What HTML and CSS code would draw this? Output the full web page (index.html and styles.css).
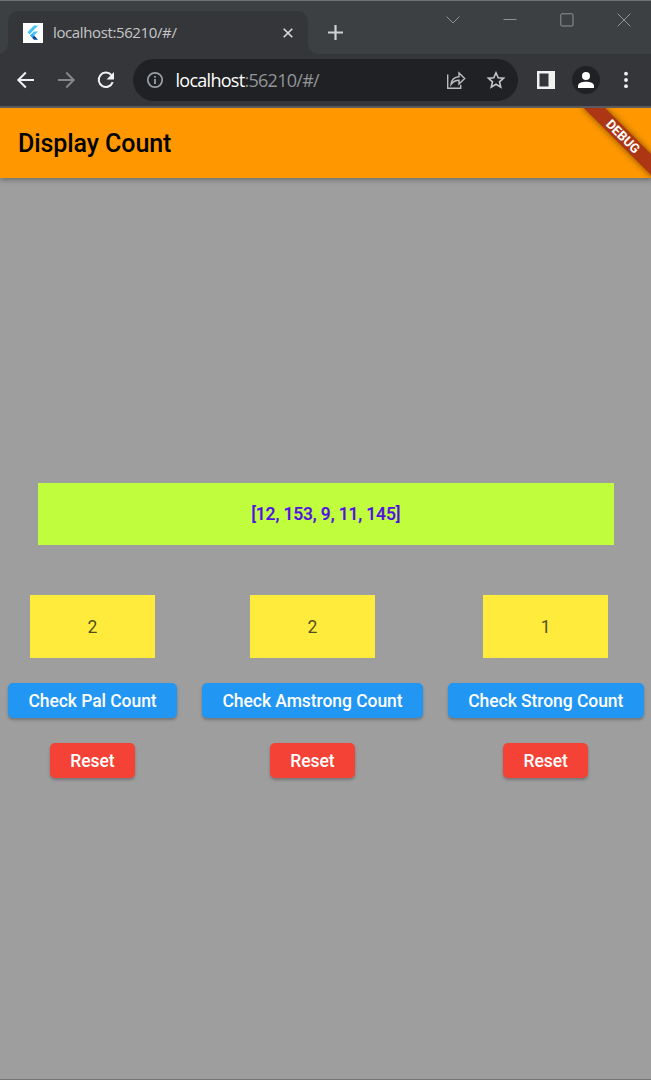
FILE: index.html
```html
<!DOCTYPE html>
<html lang="en">
<head>
<meta charset="utf-8">
<title>Display Count</title>
<link rel="stylesheet" href="styles.css">
</head>
<body>
<div class="window">
  <header class="tabstrip">
    <div class="tab">
      <svg class="favicon" width="20" height="20" viewBox="0 0 20 20"><path fill="#fff" d="M0 0h20v20H0z"/><path fill="#45c3f8" d="M11 2.5h4L6.5 11.5 4.4 9.3zM11 8.5h4L11 12.6 9 10.6z"/><path fill="#29a8ec" d="M7 12.6l2.1-2.1 2.1 2.1-2.1 2.1z"/><path fill="#07479b" d="M9.1 14.7l2.1-2.1 3.8 4.2h-4z"/></svg>
      <span class="tab-title">localhost:56210/#/</span>
      <svg class="tab-close" width="12" height="12" viewBox="0 0 12 12"><path d="M1.7 1.7l8.6 8.6M10.3 1.7l-8.6 8.6" stroke="#dadce0" stroke-width="1.6"/></svg>
    </div>
    <svg class="new-tab" width="16" height="16" viewBox="0 0 16 16"><path d="M7.500 0v15M0 7.500h15" stroke="#cfd1d3" stroke-width="2.200"/></svg>
    <div class="controls">
      <svg width="14" height="14" viewBox="0 0 14 14"><path d="M.5 3.5L7 10l6.500-6.500"/></svg>
      <svg width="14" height="14" viewBox="0 0 14 14"><path d="M.5 6.500h13"/></svg>
      <svg width="14" height="14" viewBox="0 0 14 14"><rect x=".8" y=".8" width="12.200" height="12.200" rx="1"/></svg>
      <svg width="14" height="14" viewBox="0 0 14 14"><path d="M.7.7l12.600 12.600M13.300.7L.7 13.300"/></svg>
    </div>
  </header>
  <div class="toolbar">
    <svg class="nav" width="20" height="20" viewBox="0 0 20 20"><path d="M18 10H2.700M9.800 2.500L2.300 10l7.500 7.500" fill="none" stroke="#f1f1f2" stroke-width="2"/></svg>
    <svg class="nav" width="20" height="20" viewBox="0 0 20 20"><path d="M2 10h15.300M10.200 2.500l7.500 7.500-7.500 7.500" fill="none" stroke="#86878a" stroke-width="2"/></svg>
    <svg class="nav" width="20" height="20" viewBox="0 0 20 20"><path d="M16.700 12.200A7.200 7.200 0 1 1 15.300 5" fill="none" stroke="#f1f1f2" stroke-width="2"/><path d="M18 2v7.500h-7.500z" fill="#f1f1f2"/></svg>
    <div class="omnibox">
      <svg width="18" height="18" viewBox="0 0 18 18"><circle cx="9" cy="9" r="7.200" fill="none" stroke="#9aa0a6" stroke-width="1.700"/><path d="M9 8v5M9 5v1.800" stroke="#9aa0a6" stroke-width="1.800"/></svg>
      <span class="url"><span class="host">localhost</span>:56210/#/</span>
      <svg class="share" width="20" height="20" viewBox="0 0 20 20" fill="none" stroke="#b9bbbd" stroke-width="1.400"><path d="M1.700 4.500v13.800h13v-3.500"/><path d="M5 14.500c.5-4.700 3-7.500 8-7.800V3l5.700 5.500L13 14v-3.700c-3.500 0-6 1.500-8 4.200z"/></svg>
      <svg width="20" height="20" viewBox="0 0 20 20"><path d="M10 2.700l2.200 5 5.400.5-4.100 3.600 1.200 5.300L10 14.300l-4.700 2.800 1.200-5.300-4.100-3.600 5.400-.5z" fill="none" stroke="#c4c6c8" stroke-width="1.600"/></svg>
    </div>
    <svg class="panel" width="18" height="18" viewBox="0 0 18 18"><path fill="#f1f1f2" fill-rule="evenodd" d="M0 0h18v18H0zM2.500 2.500v13h9v-13z"/></svg>
    <svg class="avatar" width="28" height="28" viewBox="0 0 28 28"><circle cx="14" cy="14" r="14" fill="#202124"/><circle cx="14" cy="10" r="4" fill="#fff"/><path d="M6 22v-2c0-3 4-4.300 8-4.300s8 1.300 8 4.300v2z" fill="#fff"/></svg>
    <svg class="more" width="6" height="18" viewBox="0 0 6 18" fill="#f1f1f2"><circle cx="3" cy="2.700" r="1.900"/><circle cx="3" cy="9" r="1.900"/><circle cx="3" cy="15.200" r="1.900"/></svg>
  </div>
  <main class="app">
    <div class="appbar"><h1>Display Count</h1></div>
    <div class="debug"><span>DEBUG</span></div>
    <section class="content">
      <div class="numbers">[12, 153, 9, 11, 145]</div>
      <div class="columns">
        <div class="column pal">
          <div class="count">2</div>
          <button class="btn check">Check Pal Count</button>
          <button class="btn reset">Reset</button>
        </div>
        <div class="column amstrong">
          <div class="count">2</div>
          <button class="btn check">Check Amstrong Count</button>
          <button class="btn reset">Reset</button>
        </div>
        <div class="column strong">
          <div class="count">1</div>
          <button class="btn check">Check Strong Count</button>
          <button class="btn reset">Reset</button>
        </div>
      </div>
    </section>
  </main>
</div>
</body>
</html>
```
FILE: styles.css
```css
* { box-sizing: border-box; }
body { margin: 0; font-family: Roboto, sans-serif; }
svg { display: block; flex: none; }

.window {
  display: flex;
  flex-direction: column;
  width: 651px;
  height: 1080px;
  overflow: hidden;
  background: #35363a;
}

.tabstrip {
  display: flex;
  height: 54px;
  padding-left: 8px;
  background: #3c4043;
  border-top: 1px solid #737373;
}
.tab {
  position: relative;
  display: flex;
  align-items: center;
  width: 300px;
  height: 43px;
  margin-top: 10px;
  padding: 0 14px 0 15px;
  background: #35363a;
  border-radius: 10px 10px 0 0;
}
.tab::before,
.tab::after {
  content: "";
  position: absolute;
  bottom: 0;
  width: 10px;
  height: 10px;
}
.tab::before { right: 100%; background: radial-gradient(circle at 0 0, transparent 9.5px, #35363a 10px); }
.tab::after { left: 100%; background: radial-gradient(circle at 100% 0, transparent 9.5px, #35363a 10px); }
.tab-title {
  flex: 1;
  margin: -2px 0 0 10px;
  font: 15px "Open Sans", sans-serif;
  letter-spacing: -0.38px;
  color: #c6c7c9;
}
.new-tab { margin: 24px 0 0 20px; }
.controls {
  display: flex;
  gap: 43px;
  margin: 12px 0 0 auto;
  padding-right: 20.500px;
}
.controls svg { fill: none; stroke: #8f9294; stroke-width: 1; }

.toolbar {
  display: flex;
  align-items: center;
  height: 54px;
  padding-left: 16px;
  border-bottom: 2px solid #5b5a5f;
}
.nav { margin-right: 20px; }
.omnibox {
  display: flex;
  align-items: center;
  width: 385px;
  height: 42px;
  margin-left: -3px;
  padding: 0 12px 0 13px;
  border-radius: 21px;
  background: #202124;
}
.url {
  flex: 1;
  margin-left: 11.500px;
  font: 18px "Open Sans", sans-serif;
  letter-spacing: -0.72px;
  color: #929497;
}
.host { color: #fff; }
.share { margin-right: 20px; }
.panel { margin-left: 18.500px; }
.avatar { margin-left: 17.500px; }
.more { margin-left: 22.500px; }

.app {
  position: relative;
  flex: 1;
  display: flex;
  flex-direction: column;
  overflow: hidden;
  background: #9e9e9e;
  border-bottom: 1px solid #787475;
}
.appbar {
  display: flex;
  align-items: center;
  height: 70px;
  padding-left: 18px;
  background: #ff9800;
  box-shadow: 0 2px 5px rgba(0, 0, 0, .3);
}
.appbar h1 {
  margin: 0;
  font-size: 25px;
  font-weight: 500;
  letter-spacing: -0.08px;
  color: #000;
}
.debug {
  position: absolute;
  top: 21px;
  right: -21.500px;
  width: 100px;
  height: 15px;
  background: #ad3715;
  box-shadow: 0 0 7px rgba(0, 0, 0, .5);
  color: #fff;
  font-size: 13px;
  font-weight: 700;
  line-height: 15px;
  text-align: center;
  transform: rotate(45deg);
}

.content {
  flex: 1;
  display: flex;
  flex-direction: column;
  padding-top: 304.500px;
  font-size: 17.500px;
}
.numbers {
  height: 62.500px;
  margin: 0 37.500px 0 38px;
  background: #c0fd3d;
  color: #5012e0;
  font-weight: 500;
  letter-spacing: -0.13px;
  -webkit-text-stroke: 0.2px #5012e0;
  line-height: 63.500px;
  text-align: center;
}
.columns {
  display: flex;
  justify-content: space-between;
  margin-top: 50px;
  padding: 0 7.500px 0 8px;
}
.column {
  display: flex;
  flex-direction: column;
  align-items: center;
}
.pal { width: 169px; }
.amstrong { width: 221.500px; }
.strong { width: 195.500px; }
.count {
  width: 125px;
  height: 62.500px;
  margin-bottom: 25.500px;
  background: #ffeb3b;
  color: #544e1d;
  line-height: 64px;
  text-align: center;
}
.btn {
  height: 35px;
  padding: 1px 0 0;
  border: 0;
  border-radius: 5px;
  box-shadow: 0 2px 3px rgba(0, 0, 0, .25);
  color: #fff;
  font: 500 17.500px/34px Roboto, sans-serif;
  letter-spacing: -0.06px;
  white-space: nowrap;
}
.check { width: 100%; background: #2196f3; }
.reset { width: 85px; margin-top: 25px; background: #f44336; }
```
